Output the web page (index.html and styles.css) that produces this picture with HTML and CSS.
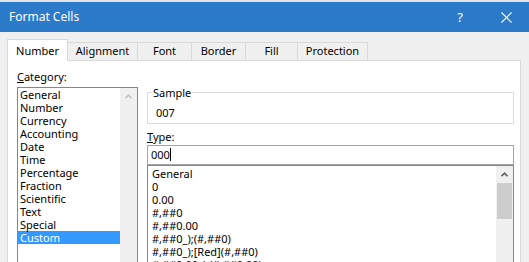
FILE: index.html
```html
<!DOCTYPE html>
<html lang="en">
<head>
    <meta charset="UTF-8">
    <title>Format Cells</title>
    <link rel="stylesheet" href="styles.css">
</head>
<body>
    <div class="sheet-strip"></div>
    <div class="titlebar">
        <span class="title">Format Cells</span>
        <span class="title-btn help">?</span>
        <span class="title-btn close">
            <svg width="11" height="11" viewBox="0 0 11 11">
                <path d="M0.5 0.5 L10.5 10.5 M10.5 0.5 L0.5 10.5" stroke="#fff" stroke-width="1.1" fill="none"/>
            </svg>
        </span>
    </div>

    <div class="tabs">
        <div class="tab active tab-number">Number</div>
        <div class="tab tab-alignment">Alignment</div>
        <div class="tab tab-font">Font</div>
        <div class="tab tab-border">Border</div>
        <div class="tab tab-fill">Fill</div>
        <div class="tab tab-protection">Protection</div>
    </div>

    <div class="panel">
        <div class="category-col">
            <div class="label"><u>C</u>ategory:</div>
            <div class="listbox category-list">
                <ul class="items">
                    <li>General</li>
                    <li>Number</li>
                    <li>Currency</li>
                    <li>Accounting</li>
                    <li>Date</li>
                    <li>Time</li>
                    <li>Percentage</li>
                    <li>Fraction</li>
                    <li>Scientific</li>
                    <li>Text</li>
                    <li>Special</li>
                    <li class="selected">Custom</li>
                </ul>
                <div class="scrollbar disabled">
                    <div class="arrow">
                        <svg width="7" height="5" viewBox="0 0 7 5"><path d="M0.5 4.2 L3.5 1.2 L6.5 4.2" stroke="#c4c4c4" stroke-width="1.6" fill="none"/></svg>
                    </div>
                </div>
            </div>
        </div>

        <div class="format-col">
            <div class="sample">
                <div class="sample-title">Sample</div>
                <div class="sample-value">007</div>
            </div>
            <div class="label type-label"><u>T</u>ype:</div>
            <div class="type-input">000<span class="caret"></span></div>
            <div class="listbox format-list">
                <ul class="items">
                    <li>General</li>
                    <li>0</li>
                    <li>0.00</li>
                    <li>#,##0</li>
                    <li>#,##0.00</li>
                    <li>#,##0_);(#,##0)</li>
                    <li>#,##0_);[Red](#,##0)</li>
                    <li>#,##0.00_);(#,##0.00)</li>
                </ul>
                <div class="scrollbar">
                    <div class="arrow">
                        <svg width="7" height="5" viewBox="0 0 7 5"><path d="M0.5 4.2 L3.5 1.2 L6.5 4.2" stroke="#606060" stroke-width="1.6" fill="none"/></svg>
                    </div>
                    <div class="thumb"></div>
                </div>
            </div>
        </div>
    </div>
</body>
</html>
```

FILE: styles.css
```css
:root {
    --title-blue: #2b7bca;
    --window-bg: #f0f0f0;
    --tab-border: #d9d9d9;
    --list-border: #828790;
    --input-border: #a5a5a5;
    --select-bg: #3399ff;
}

* {
    margin: 0;
    padding: 0;
    box-sizing: border-box;
}

body {
    width: 529px;
    height: 262px;
    overflow: hidden;
    background: var(--window-bg);
    font-family: "Noto Sans", sans-serif;
    font-size: 11px;
    line-height: 14px;
    color: #000;
}

.sheet-strip {
    height: 2px;
    background: #e2e2e2;
}

.titlebar {
    height: 30px;
    background: var(--title-blue);
    color: #fff;
    display: flex;
    align-items: center;
    padding-left: 9px;
}

.title {
    flex: 1;
    font-size: 12px;
}

.title-btn {
    width: 46px;
    height: 30px;
    display: flex;
    align-items: center;
    justify-content: center;
}

.help {
    font-size: 13px;
}

/* tabs */
.tabs {
    display: flex;
    align-items: flex-end;
    height: 21px;
    margin-top: 7px;
    padding-left: 7px;
}

.tab {
    height: 18px;
    border: 1px solid var(--tab-border);
    border-bottom: none;
    margin-left: -1px;
    padding-top: 1px;
    text-align: center;
    background: var(--window-bg);
}

.tab.active {
    height: 22px;
    margin-left: 0;
    margin-bottom: -1px;
    padding-top: 4px;
    background: #fff;
    position: relative;
    z-index: 1;
}

.tab-number { width: 61px; }
.tab-alignment { width: 71px; }
.tab-font { width: 55px; }
.tab-border { width: 55px; }
.tab-fill { width: 53px; }
.tab-protection { width: 71px; }

/* panel */
.panel {
    margin-left: 7px;
    width: 514px;
    height: 202px;
    overflow: hidden;
    background: #fff;
    border: 1px solid var(--tab-border);
    border-bottom: none;
    display: flex;
    gap: 9px;
    padding: 9px 0 0 9px;
}

.category-col {
    width: 121px;
}

.label {
    height: 14px;
}

.listbox {
    display: flex;
    border: 1px solid var(--list-border);
    border-bottom: none;
    background: #fff;
    overflow: hidden;
}

.items {
    list-style: none;
    flex: 1;
}

.items li {
    height: 13px;
    line-height: 13px;
    white-space: nowrap;
}

.category-list {
    margin-top: 3px;
    height: 175px;
}

.category-list .items li {
    padding-left: 2px;
}

.category-list .items li.selected {
    background: var(--select-bg);
    color: #fff;
}

.scrollbar {
    width: 17px;
    background: var(--window-bg);
}

.arrow {
    height: 17px;
    display: flex;
    align-items: center;
    justify-content: center;
}

.thumb {
    margin: 0 1px;
    height: 36px;
    background: #cdcdcd;
}

/* right side */
.format-col {
    width: 367px;
}

.sample {
    margin-top: 22px;
    height: 32px;
    border: 1px solid #dcdcdc;
}

.sample-title {
    width: fit-content;
    margin: -7px 0 0 4px;
    padding: 0 1px;
    background: #fff;
}

.sample-value {
    margin: 6px 0 0 8px;
}

.type-label {
    margin-top: 6px;
}

.type-input {
    margin-top: 1px;
    height: 20px;
    border: 1px solid var(--input-border);
    padding-left: 3px;
    line-height: 18px;
}

.caret {
    display: inline-block;
    width: 1px;
    height: 13px;
    background: #000;
    vertical-align: -2px;
}

.format-list {
    height: 97px;
}

.format-list .items {
    padding: 1px 0 0 4px;
}
```
